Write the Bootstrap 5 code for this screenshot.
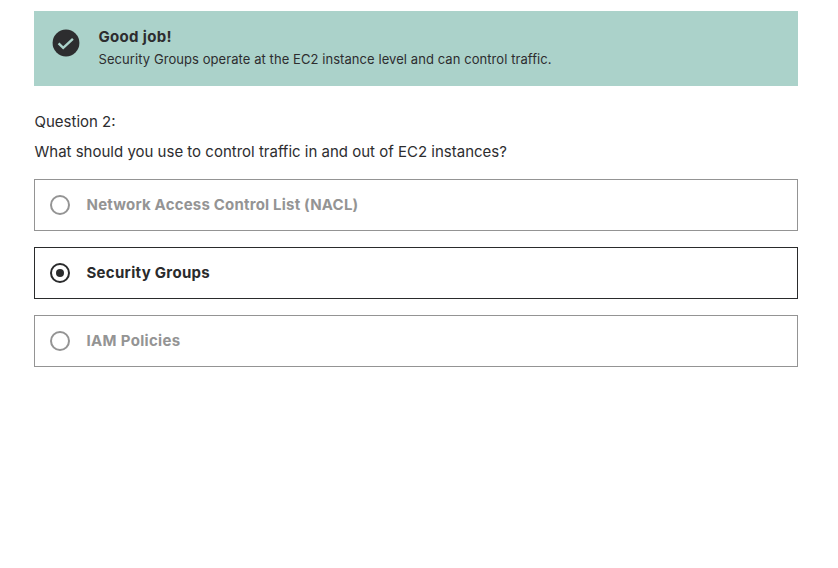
<!DOCTYPE html>
<html lang="en">
<head>
<meta charset="utf-8">
<title>Knowledge check</title>
<link href="https://cdn.jsdelivr.net/npm/bootstrap@5.3.0/dist/css/bootstrap.min.css" rel="stylesheet">
<style>
body{font-family:Inter,"Liberation Sans",sans-serif;color:#2d2d2f;background:#fff;font-size:15px}
.quiz{width:764px;margin-left:34px;padding-top:11px}
.feedback{background:#abd2ca;height:75px;padding:14px 18px;gap:18.5px}
.feedback svg{margin-top:4px}
.fb-title{font-size:15px;line-height:24px;font-weight:700;letter-spacing:.32px}
.fb-body{font-size:13px;line-height:20px;letter-spacing:.07px}
.prompt{margin-top:24px;padding-left:.5px}
.prompt p{line-height:24px;margin:0 0 6px}
.options{margin-top:15px;gap:16px}
.option{height:52px;border:1px solid #949494;padding:0 15px;gap:16.5px;color:#949494;font-weight:700;letter-spacing:.2px}
.option.chosen{border-color:#2a2b2c;color:#2a2b2c;letter-spacing:.3px}
.option.short-label{letter-spacing:.32px}
</style>
</head>
<body>
<main class="quiz">
<div class="feedback d-flex align-items-start" role="status">
<svg width="28" height="28" viewBox="0 0 28 28"><circle cx="14" cy="14" r="13.4" fill="#2d2d2f"/><path d="M6.6 14.3l4.6 4.6 9.7-9.1" fill="none" stroke="#abd2ca" stroke-width="2.4"/></svg>
<div><div class="fb-title">Good job!</div><div class="fb-body">Security Groups operate at the EC2 instance level and can control traffic.</div></div>
</div>
<div class="prompt"><p>Question 2:</p><p>What should you use to control traffic in and out of EC2 instances?</p></div>
<div class="options d-flex flex-column" role="radiogroup">
<div class="option d-flex align-items-center" role="radio" aria-checked="false"><svg width="20" height="20" viewBox="0 0 20 20"><circle cx="10" cy="10" r="9" fill="none" stroke="currentColor" stroke-width="2"/></svg><span>Network Access Control List (NACL)</span></div>
<div class="option chosen d-flex align-items-center" role="radio" aria-checked="true"><svg width="20" height="20" viewBox="0 0 20 20"><circle cx="10" cy="10" r="9" fill="none" stroke="currentColor" stroke-width="2"/><circle cx="10" cy="10" r="4" fill="currentColor"/></svg><span>Security Groups</span></div>
<div class="option short-label d-flex align-items-center" role="radio" aria-checked="false"><svg width="20" height="20" viewBox="0 0 20 20"><circle cx="10" cy="10" r="9" fill="none" stroke="currentColor" stroke-width="2"/></svg><span>IAM Policies</span></div>
</div>
</main>
<script src="https://cdn.jsdelivr.net/npm/bootstrap@5.3.0/dist/js/bootstrap.bundle.min.js"></script>
</body>
</html>
